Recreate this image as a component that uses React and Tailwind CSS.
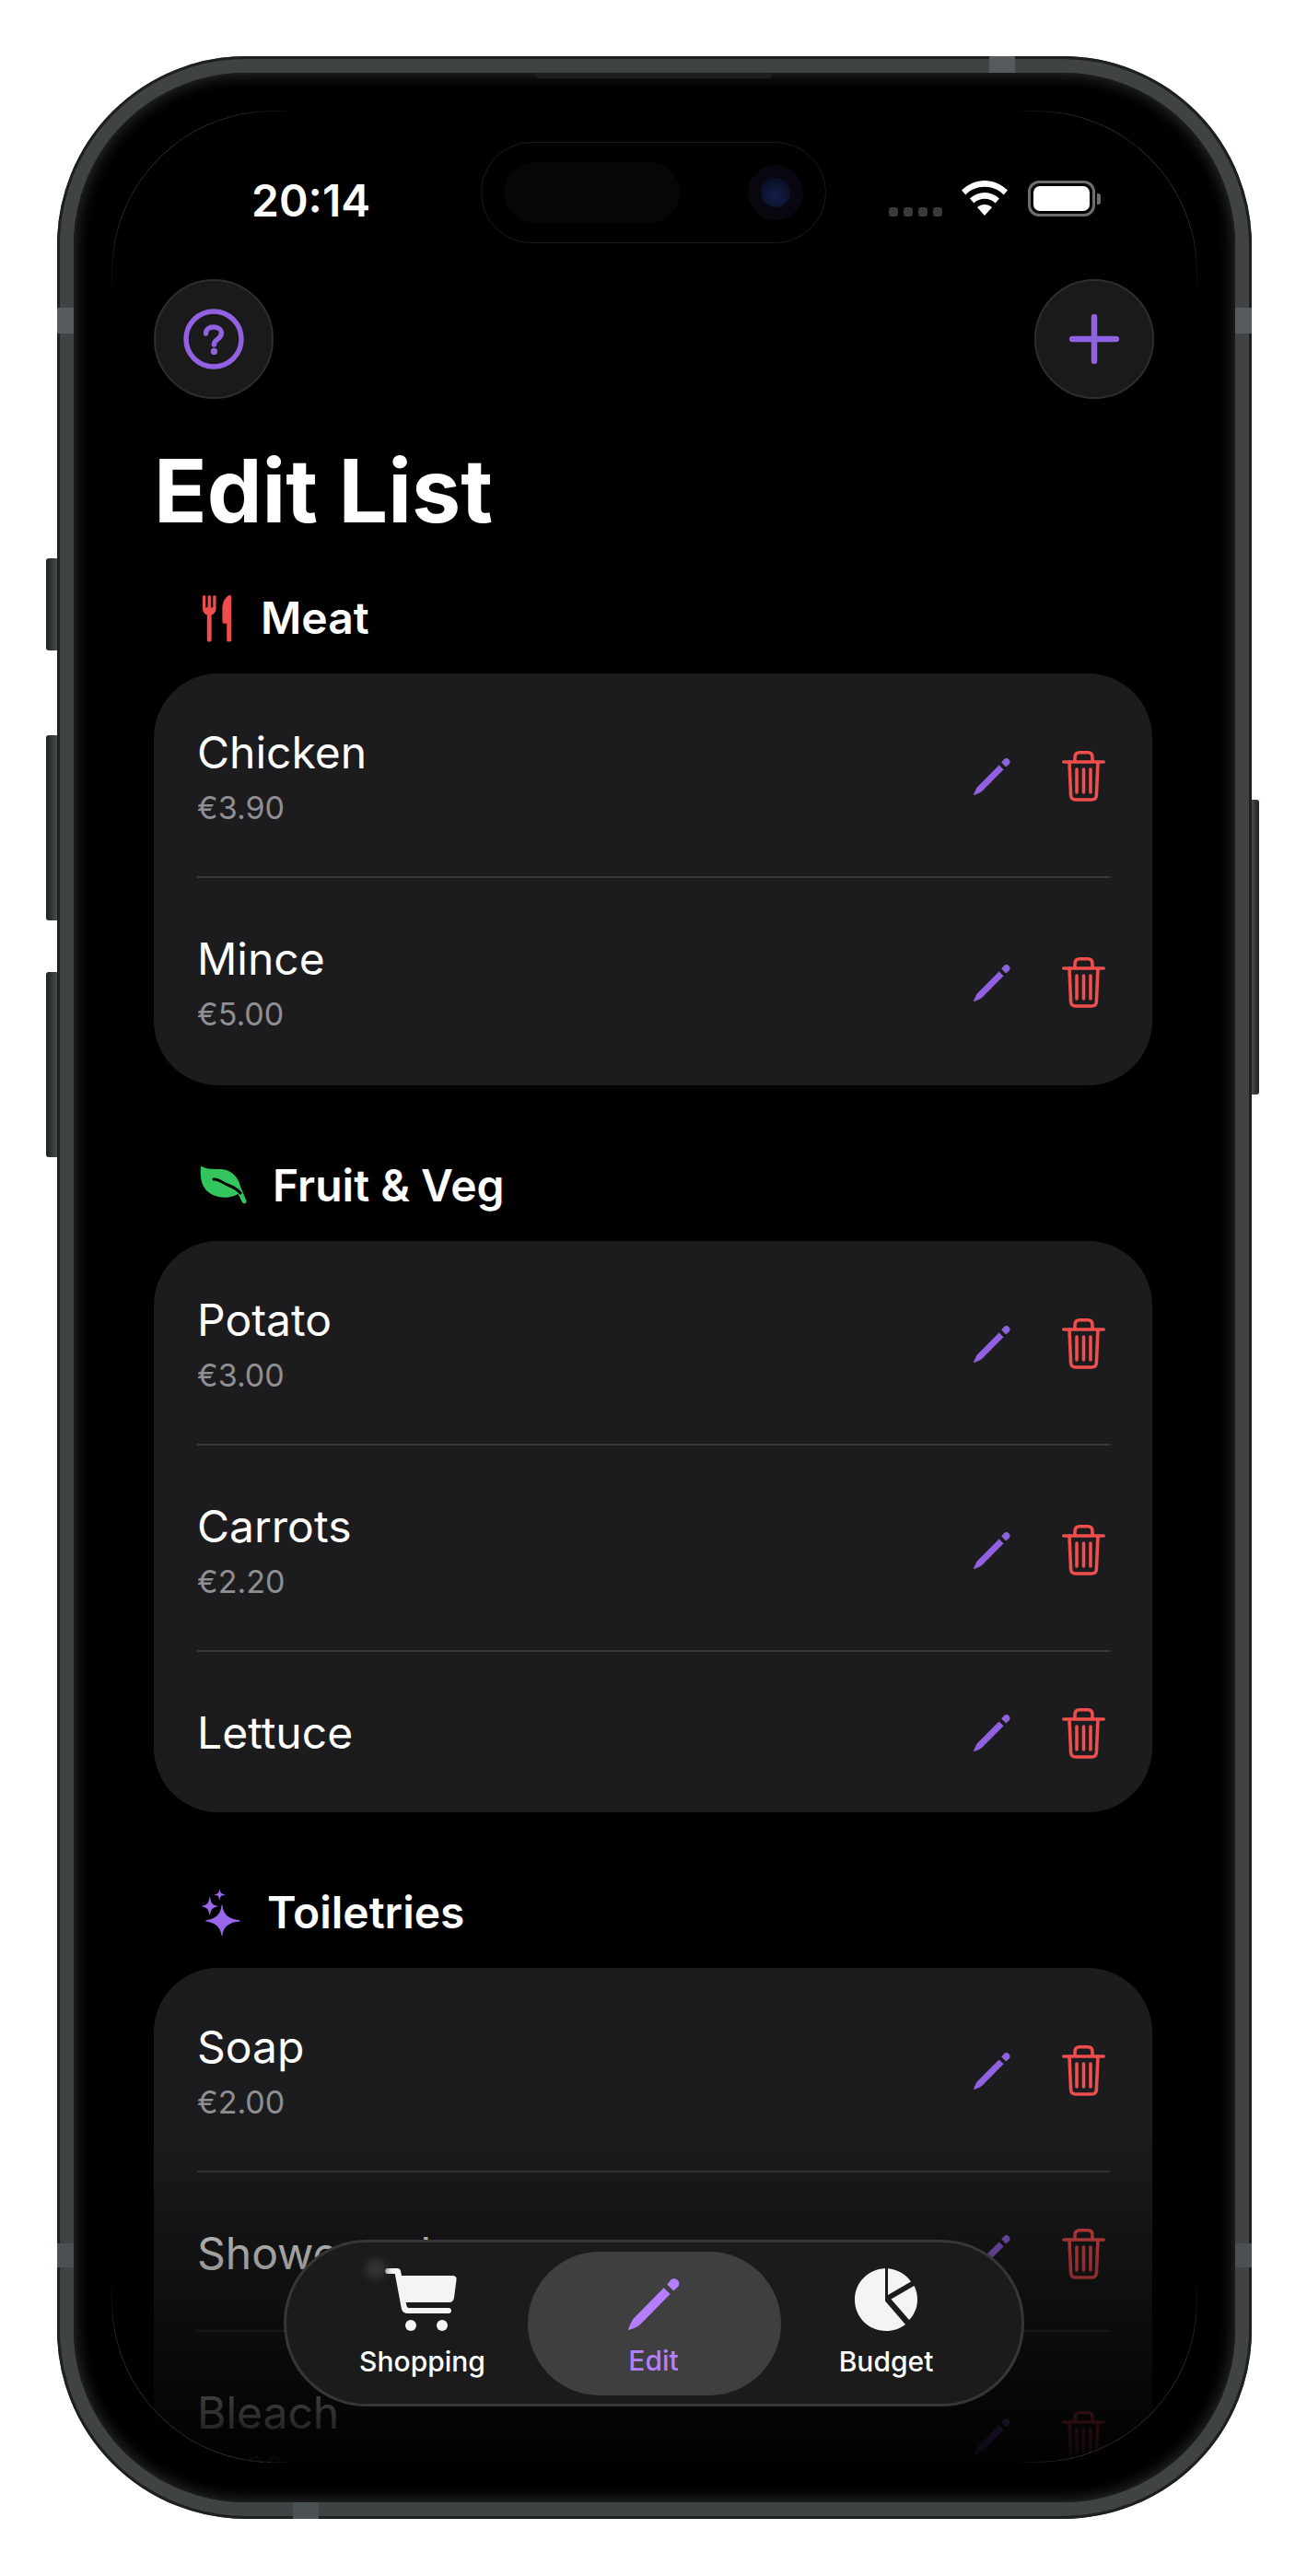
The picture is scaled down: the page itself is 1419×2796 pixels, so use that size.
import React from "react";

const sans = "font-['Inter','Liberation_Sans',sans-serif]";

const sections = [
  {
    title: "Meat",
    icon: "fork",
    items: [
      { name: "Chicken", price: "€3.90" },
      { name: "Mince", price: "€5.00" },
    ],
  },
  {
    title: "Fruit & Veg",
    icon: "leaf",
    items: [
      { name: "Potato", price: "€3.00" },
      { name: "Carrots", price: "€2.20" },
      { name: "Lettuce" },
    ],
  },
  {
    title: "Toiletries",
    icon: "sparkles",
    items: [
      { name: "Soap", price: "€2.00" },
      { name: "Shower gel" },
      { name: "Bleach", price: "€2.00" },
    ],
  },
];

function PencilIcon({ className }) {
  return (
    <svg viewBox="0 0 40 40" className={className} fill="currentColor">
      <path d="M27.6 7.4 L32.6 12.2 L9 36 C6.8 37.6 3.2 39.2 0.6 40 C0 40 0 39.6 0.2 39 C1.2 36.4 2.6 33.2 4.2 31 Z" />
      <path d="M30.2 4.6 L33 1.2 C34.4 -0.2 36.4 -0.2 38 1 C39.8 2.6 40 4.8 38.6 6.4 L35.2 9.6 Z" />
    </svg>
  );
}

function TrashIcon({ className }) {
  return (
    <svg viewBox="0 0 47 55" className={className} fill="none" stroke="currentColor" strokeWidth="3.6" strokeLinecap="round" strokeLinejoin="round">
      <path d="M1.8 12 H45.2" />
      <path d="M14 11 V7 C14 3.6 16 1.8 19 1.8 H28 C31 1.8 33 3.6 33 7 V11" />
      <path d="M8 12 L9.6 48 C9.8 51 11.4 53 14.6 53 H32.4 C35.6 53 37.2 51 37.4 48 L39 12" />
      <path d="M16 20 V45 M23.5 20 V45 M31 20 V45" />
    </svg>
  );
}

function SectionIcon({ name }) {
  if (name === "fork") {
    return (
      <svg viewBox="0 0 39 53" className="w-[38px] h-[53px]" fill="#ef4d4d">
        <path d="M3 2 C3 0 6.4 0 6.4 2 V14 H8.8 V2 C8.8 0 12.2 0 12.2 2 V14 H14.6 V2 C14.6 0 18 0 18 2 V15 C18 19 16 21.5 13 22.5 V50 C13 53 8 53 8 50 V22.5 C5 21.5 3 19 3 15 Z" />
        <path d="M32 0.5 C34 0 35 1 35 2.5 V50 C35 53 30 53 30 50 V32 H27.5 C25.8 32 25 31 25 29 V16 C25 9 27.5 3.5 32 0.5 Z" />
      </svg>
    );
  }
  if (name === "leaf") {
    return (
      <svg viewBox="0 0 51 42" className="w-[51px] h-[42px]" fill="#34c65e">
        <path d="M1 1 C1 0 2 -0.5 3 0.5 C8 3 14 3 22 3 C33 3 42 11 44 22 L50.4 37 C51 40 47.5 41.5 46 39 L41.5 30 C36 33 28 35 20 33 C8 30 -1 22 1 1 Z" />
        <path d="M15 14 C20 13 24 18 30 20 C35 22 40 24 44 29" fill="none" stroke="#000" strokeWidth="3" strokeLinecap="round" />
      </svg>
    );
  }
  return (
    <svg viewBox="0 0 46 52" className="w-[45px] h-[52px]" fill="#9a66ea">
      <path d="M25 18 C26 28 32 33 44 34.4 C45 34.6 45 35.4 44 35.6 C32 37 26 42 25 51 C24.8 52.4 24.2 52.4 24 51 C23 42 17 37 7 35.6 C6 35.4 6 34.6 7 34.4 C17 33 23 28 24 18 C24.2 16.6 24.8 16.6 25 18 Z" />
      <path d="M11.4 9 C12 15 14 18 19.6 18.6 C20 18.8 20 19.2 19.6 19.4 C14 20 12 23 11.4 28.6 C11.2 29 10.8 29 10.6 28.6 C10 23 8 20 2.4 19.4 C2 19.2 2 18.8 2.4 18.6 C8 18 10 15 10.6 9 C10.8 8.6 11.2 8.6 11.4 9 Z" />
      <path d="M22.2 0.4 C22.6 4 24 5.4 27.8 5.8 C28 6 28 6.2 27.8 6.4 C24 6.8 22.6 8 22.2 11.6 C22 12 21.8 12 21.6 11.6 C21.2 8 20 6.8 16.2 6.4 C16 6.2 16 6 16.2 5.8 C20 5.4 21.2 4 21.6 0.4 C21.8 0 22 0 22.2 0.4 Z" />
    </svg>
  );
}

function Row({ item, first, last }) {
  return (
    <div className={`ml-[47px] mr-[46px] flex items-center justify-between pb-[54px] ${first ? "pt-[57px]" : "pt-[59px]"} ${last ? "" : "border-b-2 border-[#38383a]"}`}>
      <div>
        <p className="text-[48px] leading-[58px] text-white">{item.name}</p>
        {item.price && <p className="mt-[11px] text-[34px] leading-[40px] text-[#8e8e93]">{item.price}</p>}
      </div>
      <div className="flex items-center gap-[56px] mr-[5px]">
        <PencilIcon className="w-[40px] h-[40px] text-[#9061e0]" />
        <TrashIcon className="w-[47px] h-[55px] text-[#f04d4d]" />
      </div>
    </div>
  );
}

function Section({ section, first }) {
  return (
    <section className={first ? "" : "mt-[79px]"}>
      <div className="flex items-center gap-[28px] pl-[50px] h-[60px] mb-[30px]">
        <SectionIcon name={section.icon} />
        <h2 className="text-[48px] font-semibold leading-[60px] text-white">{section.title}</h2>
      </div>
      <div className="rounded-[70px] bg-[#1c1c1e] pb-[3px]">
        {section.items.map((item, i) => (
          <Row key={item.name} item={item} first={i === 0} last={i === section.items.length - 1} />
        ))}
      </div>
    </section>
  );
}

function RoundButton({ children }) {
  return (
    <button className="flex w-[130px] h-[130px] items-center justify-center rounded-full border-2 border-[#2e2e30] bg-[#1a1a1b]">
      {children}
    </button>
  );
}

function TabBar() {
  return (
    <div className="absolute left-[187px] top-[2311px] flex h-[181px] w-[804px] items-center rounded-[90px] border-[3px] border-[#363638] bg-[#1b1b1c] px-[9px]">
      <div className="absolute left-[86px] top-[18px] h-[22px] w-[22px] rounded-full bg-[#333333] blur-[4px]" />
      <div className="flex w-[253px] flex-col items-center pl-[24px]">
        <svg viewBox="0 0 78 68" className="mr-[3px] h-[68px] w-[78px]" fill="#f4f4f5">
          <path d="M3 0 H13 C15.4 0 16.6 1.2 17 3 L18 8 H73 C76 8 78 9.6 77.6 12 L75 32 C74.6 35 72.6 37 69.6 37 H22.6 L23.6 41 C24 42.4 25 43 26.4 43 H69 C71 43 72 44.4 72 46 C72 47.6 71 49 69 49 H25 C21 49 18.6 47 17.8 43.4 L10.8 6 H3 C1 6 0 4.6 0 3 C0 1.4 1 0 3 0 Z" />
          <circle cx="28" cy="62" r="6" />
          <circle cx="62" cy="62" r="6" />
        </svg>
        <span className="mt-[14px] text-[30px] font-medium leading-[38px] text-white">Shopping</span>
      </div>
      <div className="flex h-[156px] w-[275px] flex-col items-center justify-center rounded-[78px] bg-[#3f3f40] pt-[10px] pr-[2px]">
        <PencilIcon className="h-[56px] w-[56px] text-[#b57eff]" />
        <span className="mt-[14px] text-[30px] font-medium leading-[38px] text-[#b57eff]">Edit</span>
      </div>
      <div className="flex flex-1 flex-col items-center pr-[24px]">
        <svg viewBox="0 0 68 68" className="h-[68px] w-[68px]" fill="#f4f4f5">
          <path d="M33 0.1 V35.5 L55 61 C49 65.6 42 68 34 68 C15 68 0 53 0 34 C0 16 14 1.4 33 0.1 Z" />
          <path d="M36 0.2 C46 1 55 6 61 14.5 L36 29 Z" />
          <path d="M64.5 19 C67 24 68 29 68 34 C68 42 65 50 59 56 L39.5 33.5 Z" />
        </svg>
        <span className="mt-[14px] text-[30px] font-medium leading-[38px] text-white">Budget</span>
      </div>
    </div>
  );
}

export default function App() {
  return (
    <div className={`w-[1419px] h-[2796px] overflow-hidden bg-white pl-[62px] pt-[61px] ${sans}`}>
      <div className="relative h-[2673px] w-[1297px] rounded-[205px] border-[18px] border-[#3f4344] bg-black">
        {/* side buttons */}
        <div className="absolute left-[-30px] top-[527px] h-[100px] w-[12px] rounded-l-[3px] bg-gradient-to-r from-[#1f2122] to-[#4a4e4f]" />
        <div className="absolute left-[-30px] top-[719px] h-[201px] w-[12px] rounded-l-[3px] bg-gradient-to-r from-[#1f2122] to-[#4a4e4f]" />
        <div className="absolute left-[-30px] top-[976px] h-[201px] w-[12px] rounded-l-[3px] bg-gradient-to-r from-[#1f2122] to-[#4a4e4f]" />
        <div className="absolute right-[-26px] top-[789px] h-[320px] w-[8px] rounded-r-[3px] bg-gradient-to-l from-[#1f2122] to-[#4a4e4f]" />

        {/* metal band edges */}
        <div className="pointer-events-none absolute inset-[-18px] rounded-[205px] border-[3px] border-[#1d1f20]" />
        <div className="pointer-events-none absolute inset-0 rounded-[187px] shadow-[inset_0_0_0_2px_#191b1c,inset_0_0_14px_5px_rgba(255,255,255,0.13)]" />

        {/* antenna bands */}
        <div className="absolute left-[-18px] top-[255px] h-[28px] w-[18px] bg-[#555b5c]" />
        <div className="absolute right-[-18px] top-[255px] h-[28px] w-[18px] bg-[#555b5c]" />
        <div className="absolute left-[-18px] top-[2356px] h-[26px] w-[18px] bg-[#4b5152]" />
        <div className="absolute right-[-18px] top-[2356px] h-[26px] w-[18px] bg-[#4b5152]" />
        <div className="absolute left-[994px] top-[-18px] h-[18px] w-[28px] bg-[#555b5c]" />
        <div className="absolute left-[238px] bottom-[-18px] h-[18px] w-[28px] bg-[#4b5152]" />

        {/* speaker slit */}
        <div className="absolute left-[502px] top-0 h-[6px] w-[256px] rounded-b-[4px] bg-[#1c1e1f]" />

        <div className="absolute left-[41px] top-[41px] h-[2553px] w-[1178px] overflow-hidden rounded-[175px] bg-black">
          {/* status bar */}
          <div className="flex h-[183px] items-start justify-between pl-[152px] pr-[104px] pt-[76px]">
            <span className="text-[48px] font-semibold leading-[44px] text-white">20:14</span>
            <div className="flex items-start">
              <div className="mr-[21px] mt-[29px] flex gap-[6px]">
                <span className="h-[10px] w-[10px] rounded-[3px] bg-[#3a3a3c]" />
                <span className="h-[10px] w-[10px] rounded-[3px] bg-[#3a3a3c]" />
                <span className="h-[10px] w-[10px] rounded-[3px] bg-[#3a3a3c]" />
                <span className="h-[10px] w-[10px] rounded-[3px] bg-[#3a3a3c]" />
              </div>
              <svg viewBox="0 0 50 38" className="mr-[22px] h-[38px] w-[50px]" fill="white">
                <path d="M25 0 C34 0 43 3.6 50 10.6 L45.6 15.4 C40 9.6 33 6.8 25 6.8 C17 6.8 10 9.6 4.4 15.4 L0 10.6 C7 3.6 16 0 25 0 Z" />
                <path d="M25 13 C31 13 36.6 15.2 41 19.6 L36.6 24.4 C33.4 21.4 29.4 19.8 25 19.8 C20.6 19.8 16.6 21.4 13.4 24.4 L9 19.6 C13.4 15.2 19 13 25 13 Z" />
                <path d="M25 26 C28 26 30.6 27 33 29 L25 38 L17 29 C19.4 27 22 26 25 26 Z" />
              </svg>
              <div className="flex items-center">
                <div className="h-[39px] w-[73px] rounded-[12px] border-[3px] border-[#6e6e70] p-[3px]">
                  <div className="h-full w-full rounded-[7px] bg-white" />
                </div>
                <div className="ml-[2px] h-[12px] w-[4px] rounded-r-[3px] bg-[#6e6e70]" />
              </div>
            </div>
          </div>

          {/* header */}
          <div className="flex justify-between pl-[46px] pr-[46px]">
            <RoundButton>
              <svg viewBox="0 0 66 66" className="h-[66px] w-[66px]" fill="none" stroke="#9061e0">
                <circle cx="33" cy="33" r="30" strokeWidth="5.5" />
                <path d="M24.5 27 C24.5 22.6 28 20 33 20 C38.4 20 41.4 23 41.4 26.6 C41.4 30 39.6 31.6 37 33.4 C34.6 35 33.4 36.4 33.4 39" strokeWidth="5.4" strokeLinecap="round" />
                <circle cx="33.4" cy="46.4" r="3.6" fill="#9061e0" stroke="none" />
              </svg>
            </RoundButton>
            <RoundButton>
              <svg viewBox="0 0 54 54" className="h-[54px] w-[54px]" fill="none" stroke="#9061e0" strokeWidth="6.5" strokeLinecap="round">
                <path d="M27 3 V51 M3 27 H51" />
              </svg>
            </RoundButton>
          </div>

          <div className="pl-[46px] pr-[48px]">
            <h1 className="mb-[52px] mt-[44px] text-[95px] font-bold leading-[112px] text-white">Edit List</h1>
            {sections.map((section, i) => (
              <Section key={section.title} section={section} first={i === 0} />
            ))}
          </div>

          {/* bottom fade over the list */}
          <div className="absolute inset-x-0 bottom-0 h-[370px] bg-gradient-to-b from-black/0 to-black/95" />

          <TabBar />
        </div>

        {/* dynamic island */}
        <div className="absolute left-[442px] top-[75px] flex h-[110px] w-[375px] items-center justify-between rounded-[55px] border border-[#1a1a1a] bg-black pl-[24px] pr-[24px]">
          <div className="h-[66px] w-[191px] rounded-[33px] bg-[#060606]" />
          <div className="flex h-[60px] w-[60px] items-center justify-center rounded-full bg-[#0a0610]">
            <div className="h-[32px] w-[32px] rounded-full bg-[radial-gradient(circle_at_50%_60%,#14204a,#050818)]" />
          </div>
        </div>

        {/* screen edge hairlines */}
        <div className="pointer-events-none absolute left-[41px] top-[41px] h-[200px] w-[200px] rounded-tl-[175px] border-l border-t border-[#2a2a2a] [mask-image:linear-gradient(135deg,black_35%,transparent_50%)]" />
        <div className="pointer-events-none absolute right-[41px] top-[41px] h-[200px] w-[200px] rounded-tr-[175px] border-r border-t border-[#2a2a2a] [mask-image:linear-gradient(225deg,black_35%,transparent_50%)]" />
        <div className="pointer-events-none absolute left-[41px] top-[2394px] h-[200px] w-[200px] rounded-bl-[175px] border-b border-l border-[#2a2a2a] [mask-image:linear-gradient(45deg,black_35%,transparent_50%)]" />
        <div className="pointer-events-none absolute right-[41px] top-[2394px] h-[200px] w-[200px] rounded-br-[175px] border-b border-r border-[#2a2a2a] [mask-image:linear-gradient(315deg,black_35%,transparent_50%)]" />
      </div>
    </div>
  );
}
